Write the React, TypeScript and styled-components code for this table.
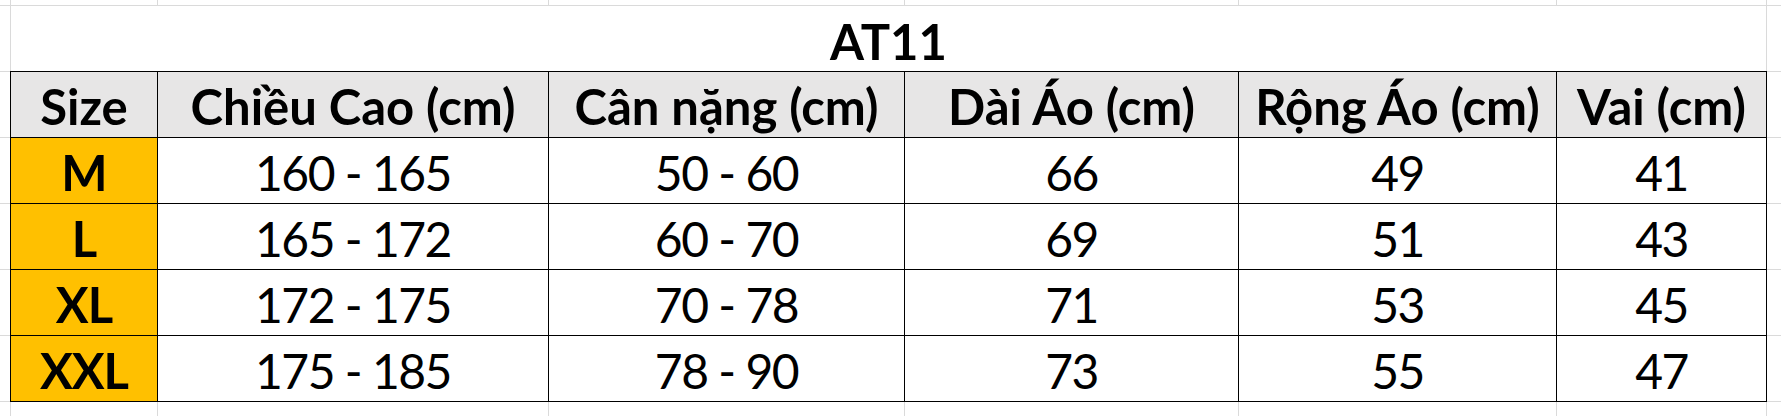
import React from "react";
import styled, { createGlobalStyle } from "styled-components";

const Global = createGlobalStyle`
  html, body { margin: 0; padding: 0; background: #ffffff; }
  body { font-family: Lato, "Noto Sans", sans-serif; }
`;

const COLS = [146, 390, 355, 333, 317, 209];

const Sheet = styled.div`
  display: grid;
  grid-template-columns: 10px ${COLS.map((c) => `${c}px`).join(" ")} 1fr;
  grid-template-rows: 5px 65px 65px 65px 65px 65px 65px 1fr;
  gap: 1px;
  background: #dadada;
  width: 1781px;
  height: 416px;
  overflow: hidden;
`;

const Blank = styled.div`
  background: #ffffff;
`;

const Title = styled.div`
  grid-column: 2 / 8;
  grid-row: 2;
  background: #ffffff;
  display: flex;
  align-items: center;
  justify-content: center;
  font-weight: 700;
  font-size: 49px;
  color: #000;
  padding-top: 4px;
`;

const Table = styled.div`
  grid-column: 2 / 8;
  grid-row: 3 / 8;
  margin: -1px;
  display: grid;
  grid-template-columns: ${COLS.map((c) => `${c}px`).join(" ")};
  grid-auto-rows: 65px;
  gap: 1px;
  padding: 1px;
  background: #000000;
`;

const Cell = styled.div<{ $kind: "head" | "size" | "data" }>`
  display: flex;
  align-items: center;
  justify-content: center;
  white-space: nowrap;
  font-size: ${(p) => (p.$kind === "data" ? "48px" : "49px")};
  letter-spacing: ${(p) => (p.$kind === "data" ? "-1.5px" : p.$kind === "size" ? "-1px" : "0")};
  color: #000;
  padding-top: 3px;
  font-weight: ${(p) => (p.$kind === "data" ? 400 : 700)};
  background: ${(p) =>
    p.$kind === "head" ? "#e7e6e6" : p.$kind === "size" ? "#ffc000" : "#ffffff"};
`;

const headers = ["Size", "Chiều Cao (cm)", "Cân nặng (cm)", "Dài Áo (cm)", "Rộng Áo (cm)", "Vai (cm)"];
const rows = [
  ["M", "160 - 165", "50 - 60", "66", "49", "41"],
  ["L", "165 - 172", "60 - 70", "69", "51", "43"],
  ["XL", "172 - 175", "70 - 78", "71", "53", "45"],
  ["XXL", "175 - 185", "78 - 90", "73", "55", "47"],
];

export default function App() {
  const blanks: React.ReactNode[] = [];
  for (let c = 1; c <= 8; c++) blanks.push(<Blank key={`t${c}`} style={{ gridRow: 1, gridColumn: c }} />);
  for (let r = 2; r <= 7; r++) {
    blanks.push(<Blank key={`l${r}`} style={{ gridRow: r, gridColumn: 1 }} />);
    blanks.push(<Blank key={`r${r}`} style={{ gridRow: r, gridColumn: 8 }} />);
  }
  for (let c = 1; c <= 8; c++) blanks.push(<Blank key={`b${c}`} style={{ gridRow: 8, gridColumn: c }} />);

  return (
    <>
      <Global />
      <Sheet>
        {blanks}
        <Title>AT11</Title>
        <Table>
          {headers.map((h) => (
            <Cell key={h} $kind="head">{h}</Cell>
          ))}
          {rows.map((r) =>
            r.map((v, i) => (
              <Cell key={r[0] + i} $kind={i === 0 ? "size" : "data"}>{v}</Cell>
            ))
          )}
        </Table>
      </Sheet>
    </>
  );
}
